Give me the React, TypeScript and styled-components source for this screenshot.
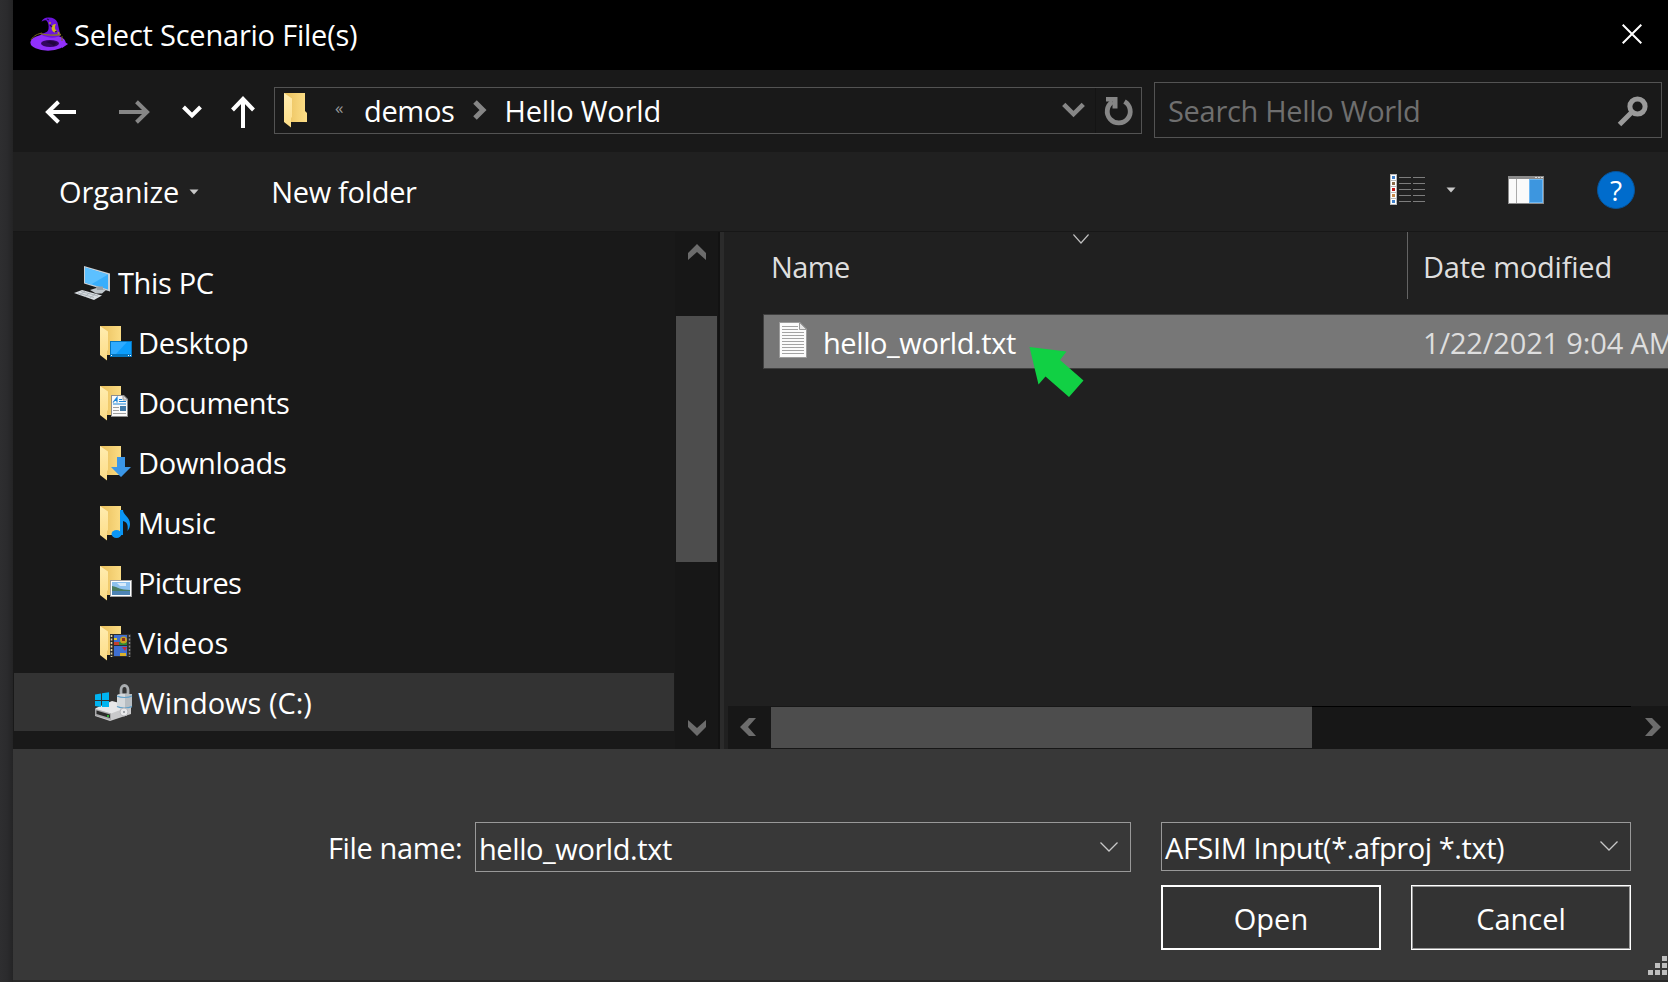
import React from 'react';
import styled, { createGlobalStyle } from 'styled-components';

const GlobalStyle = createGlobalStyle`
  * { box-sizing: border-box; }
  body {
    margin: 0;
    background: #2b2b2d;
    overflow: hidden;
    font-family: "Open Sans", "Noto Sans", sans-serif;
    font-size: 29px;
    line-height: 40px;
    color: #fff;
  }
  svg { display: block; flex: none; }
`;

const Desktop = styled.div`
  display: flex;
  width: 1668px;
  height: 982px;
  overflow: hidden;
`;

const Backdrop = styled.div`
  flex: none;
  width: 13px;
  background: linear-gradient(90deg, #2e2e30 0, #2b2b2d 7px, #242425 13px);
`;

const Dialog = styled.div`
  display: flex;
  flex-direction: column;
  width: 1655px;
  height: 982px;
  border-bottom: 2px solid #282828;
`;

const Label = styled.span<{ $spacing: number; $color?: string }>`
  white-space: pre;
  letter-spacing: ${(p) => p.$spacing}px;
  color: ${(p) => p.$color ?? '#fff'};
`;

const TitleBar = styled.header`
  display: flex;
  flex: none;
  align-items: center;
  height: 70px;
  padding: 0 26px 2px 17px;
  background: #000;
`;

const TitleText = styled.h1`
  flex: 1;
  margin: 2px 0 0 6px;
  font-size: inherit;
  font-weight: 400;
`;

const NavBar = styled.nav`
  display: flex;
  flex: none;
  height: 82px;
  padding: 12px 6px 14px 32px;
  background: #191919;
`;

const NavButton = styled.div<{ $gap: number }>`
  display: flex;
  align-items: center;
  height: 60px;
  margin-right: ${(p) => p.$gap}px;
`;

const AddressBar = styled.div`
  display: flex;
  align-items: center;
  width: 868px;
  height: 47px;
  margin: 5px 12px 0 0;
  padding-left: 9px;
  border: 1px solid #535353;
`;

const Overflow = styled.span`
  width: 10px;
  margin: -5px 19px 0 27px;
  font-size: 17px;
  color: #9a9a9a;
`;

const Crumb = styled.div`
  margin-top: 1px;
`;

const CrumbArrow = styled.div`
  margin: -2px 18px 0 18px;
`;

const AddressTools = styled.div`
  display: flex;
  align-items: center;
  margin-left: auto;
  height: 100%;
`;

const RefreshButton = styled.div`
  display: flex;
  align-items: center;
  height: 100%;
  margin-left: 10px;
  padding: 0 7px 0 8px;
  border-left: 1px solid #141414;
`;

const SearchBox = styled.div`
  display: flex;
  align-items: center;
  justify-content: space-between;
  width: 508px;
  height: 56px;
  padding: 2px 13px 0;
  border: 1px solid #535353;
`;

const Toolbar = styled.div`
  display: flex;
  flex: none;
  align-items: center;
  height: 80px;
  padding: 0 33px 0 46px;
  background: #202020;
  border-bottom: 1px solid #171717;
`;

const ToolbarButton = styled.div`
  display: flex;
  align-items: center;
  gap: 10px;
  margin-right: 72px;
`;

const ToolbarIcons = styled.div`
  display: flex;
  align-items: center;
  height: 40px;
  margin: -4px 0 0 auto;
`;

const IconSlot = styled.div<{ $gap?: number }>`
  margin-right: ${(p) => p.$gap ?? 0}px;
`;

const Body = styled.main`
  display: flex;
  flex: none;
  height: 517px;
  background: #202020;
`;

const Tree = styled.ul`
  width: 662px;
  margin: 0;
  padding: 20px 0 0;
  list-style: none;
  background: #191919;
`;

const TreeItem = styled.li<{ $indent: number; $gap: number; $selected?: boolean }>`
  display: flex;
  align-items: center;
  gap: ${(p) => p.$gap}px;
  height: 60px;
  padding: 2px 0 0 ${(p) => p.$indent}px;
  border: 1px solid #191919;
  background: ${(p) => (p.$selected ? '#333' : 'transparent')};
  background-clip: padding-box;
`;

const TreeScroll = styled.div`
  display: flex;
  flex-direction: column;
  align-items: center;
  width: 45px;
  padding: 12px 1px 13px 1px;
  background: #171717;
  border-right: 2px solid #121212;
`;

const TreeThumb = styled.div`
  width: 41px;
  height: 246px;
  margin: 56px 0 auto;
  background: #4d4d4d;
`;

const Splitter = styled.div`
  width: 4px;
  background: #2b2b2b;
`;

const Files = styled.section`
  display: flex;
  flex-direction: column;
  width: 944px;
`;

const ColumnHeaders = styled.div`
  display: flex;
  height: 67px;
`;

const NameColumn = styled.div`
  display: flex;
  width: 683px;
  padding: 15px 0 0 47px;
`;

const SortMark = styled.div`
  margin: -13px 0 0 223px;
`;

const DateColumn = styled.div`
  flex: 1;
  padding: 15px 0 0 15px;
  border-left: 1px solid #646464;
`;

const FileRow = styled.div`
  position: relative;
  display: flex;
  align-items: center;
  height: 55px;
  margin: 15px 0 0 39px;
  padding: 0 0 0 15px;
  background: #777;
  border: 1px solid #3f3f3f;
  border-right: 0;
`;

const FileIconSlot = styled.div`
  margin-top: -3px;
`;

const FileName = styled.div`
  flex: none;
  width: 616px;
  padding: 3px 0 0 16px;
`;

const FileDate = styled.div`
  flex: 1;
  width: 0;
  padding-top: 3px;
  overflow: hidden;
`;

const Pointer = styled.div`
  position: absolute;
  left: 265px;
  top: 31px;
`;

const FileScroll = styled.div`
  display: flex;
  align-items: center;
  height: 43px;
  margin: auto 0 0 4px;
  padding: 0 7px 0 12px;
  background: #171717;
`;

const FileThumb = styled.div`
  width: 541px;
  height: 41px;
  margin-left: 15px;
  background: #4d4d4d;
`;

const FileTrack = styled.div`
  flex: 1;
  height: 43px;
  margin-right: 14px;
  border-top: 1px solid #000;
`;

const Footer = styled.footer`
  position: relative;
  display: grid;
  flex: none;
  grid-template-columns: 145px 656px 220px 220px;
  grid-template-rows: 50px 65px;
  row-gap: 13px;
  height: 231px;
  padding: 73px 0 0 317px;
  background: #383838;
`;

const FieldLabel = styled.label`
  padding: 6px 0 0;
  margin-left: -2px;
`;

const Field = styled.div`
  display: flex;
  align-items: center;
  justify-content: space-between;
  height: 50px;
  padding: 3px 12px 0 3px;
  border: 1px solid #999;
`;

const TypeSelect = styled(Field)`
  grid-column: 3 / span 2;
  width: 470px;
  height: 49px;
  margin-left: 30px;
  padding-top: 2px;
  background: #333;
`;

const FieldChevron = styled.div`
  margin-top: -3px;
`;

const Actions = styled.div`
  display: flex;
  grid-column: 3 / span 2;
  gap: 30px;
  width: 470px;
  margin-left: 30px;
`;

const Button = styled.div<{ $primary?: boolean }>`
  display: flex;
  flex: 1;
  align-items: center;
  justify-content: center;
  padding-top: 3px;
  background: #333;
  border: 1px solid #fff;
  box-shadow: inset 0 0 0 1px ${(p) => (p.$primary ? '#fff' : '#999')};
`;

const Grip = styled.div`
  position: absolute;
  right: 1px;
  bottom: 5px;
`;

const HatIcon = () => (
  <svg width="38" height="36" viewBox="0 0 38 36">
    <ellipse cx="18" cy="26.500" rx="17.600" ry="8.200" fill="#9130fb" />
    <path d="M31 24 38 28 32 32z" fill="#9130fb" />
    <path d="M11 18c4-1 7-2 7.500-5C19 9 18 6 16.500 4.500 14 3.500 13 5 11.500 5.500 13 2.500 16 1 19 1.500c4 0 7 1.500 8.500 5l3 13c-4 3-13 3-19.500-1z" fill="#6d14dd" />
    <path d="M10 17.500c6 2 14 2 21 1" fill="none" stroke="#8f7d1b" strokeWidth="1.300" />
    <path d="M1 24c3-5 7-6 11-7M32 20v5" fill="none" stroke="#75651c" strokeWidth="1" />
    <path d="M26 8c-4 0-5 3-4 6s4 3 6 1c-3 0-4-4-2-7z" fill="#d0b820" />
    <circle cx="20" cy="7" r="1" fill="#b59c26" /><circle cx="28.500" cy="17" r="1" fill="#b59c26" />
    <path d="M20 9l2 2M25 16l2-1M17 3l2 1" stroke="#2d0759" strokeWidth="1.300" />
    <ellipse cx="20" cy="27.500" rx="9" ry="3.400" fill="#32075e" />
    <path d="M16 26c4-2 8-1 11 1l-3 3c-2-2-5-3-8-4z" fill="#210440" />
  </svg>
);

const CloseIcon = () => (
  <svg width="20" height="20" viewBox="0 0 20 20"><path d="M.7.7 19.300 19.300M19.300.7.7 19.300" stroke="#fff" strokeWidth="2" /></svg>
);

const ArrowLeft = () => (
  <svg width="31" height="24" viewBox="0 0 31 24"><path d="M31 12H3M13.500 1.800 3 12l10.500 10.200" fill="none" stroke="#fff" strokeWidth="4" /></svg>
);
const ArrowRight = () => (
  <svg width="31" height="24" viewBox="0 0 31 24"><path d="M0 12h28M17.500 1.800 28 12 17.500 22.200" fill="none" stroke="#868686" strokeWidth="4" /></svg>
);
const ArrowUp = () => (
  <svg width="24" height="32" viewBox="0 0 24 32"><path d="M12 32V3M1.500 14 12 3l10.500 11" fill="none" stroke="#fff" strokeWidth="4" /></svg>
);
const Chevron = ({ color, size = 20 }: { color: string; size?: number }) => (
  <svg width={size} height={size * 0.7} viewBox="0 0 20 14"><path d="M1.500 2 10 10.500 18.500 2" fill="none" stroke={color} strokeWidth="4" /></svg>
);
const CrumbChevron = () => (
  <svg width="14" height="20" viewBox="0 0 14 20"><path d="M2 2l8 8L2 18" fill="none" stroke="#868686" strokeWidth="5" /></svg>
);
const RefreshIcon = () => (
  <svg width="30" height="30" viewBox="0 0 30 30">
    <path d="M20.500 5.500A11.500 11.500 0 1 1 8.500 5.800" fill="none" stroke="#868686" strokeWidth="4.800" />
    <path d="M2 1h11.500v11.500h-5V5.500H2z" fill="#868686" />
  </svg>
);
const SearchIcon = () => (
  <svg width="31" height="31" viewBox="0 0 31 31">
    <circle cx="20.500" cy="10.500" r="7.600" fill="none" stroke="#9a9a9a" strokeWidth="5" />
    <path d="M15 16 2.500 28.500" stroke="#9a9a9a" strokeWidth="5" />
  </svg>
);
const Triangle = () => (
  <svg width="10" height="6" viewBox="0 0 10 6"><path d="M.5.500h9L5 5.500z" fill="#c8c8c8" /></svg>
);

const ViewIcon = () => (
  <svg width="36" height="31" viewBox="0 0 36 31">
    <path d="M0 0h7v31H0z" fill="#b9b9b9" />
    {['#3f7fc9', '#8a6a4a', '#c01818', '#c98a4a', '#3f7fc9'].map((c, i) => (
      <g key={i}>
        <path d={`M1 ${1 + i * 6}h5v5H1z`} fill="#fff" />
        <path d={`M2 ${2 + i * 6}h3v3H2z`} fill={c} />
        <path d={`M9 ${3.5 + i * 6}h12M23 ${3.5 + i * 6}h12`} stroke="#7d7d7d" />
      </g>
    ))}
  </svg>
);

const PaneIcon = () => (
  <svg width="36" height="28" viewBox="0 0 36 28">
    <path d="M0 0h36v28H0z" fill="#8b8b8b" />
    <path d="M1 3h20v24H1z" fill="#fafafa" />
    <path d="M8.500 3v24" stroke="#aaa" />
    <path d="M21 3h14v24H21z" fill="#6db8f4" /><path d="M22 4h12v22H22z" fill="#3d96df" />
    <path d="M27 1h2v1h-2zM30 1h2v1h-2zM33 1h2v1h-2z" fill="#ddd" />
  </svg>
);

const HelpBadge = styled.div`
  width: 38px;
  height: 38px;
  border-radius: 50%;
  background: #006ccc;
  border: 1px solid #07549a;
  font-size: 28px;
  font-weight: 500;
  line-height: 36px;
  text-align: center;
`;

const FolderShape = () => (
  <>
    <defs>
      <linearGradient id="folderBack" x1="0" y1="0" x2="1" y2="0">
        <stop offset="0" stopColor="#e9bf5c" /><stop offset="1" stopColor="#fddf88" />
      </linearGradient>
      <linearGradient id="folderFront" x1="0" y1="0" x2="0" y2="1">
        <stop offset="0" stopColor="#ffecb0" /><stop offset="1" stopColor="#fddd86" />
      </linearGradient>
    </defs>
    <path d="M0 0h21v18l2 2v9H2z" fill="url(#folderBack)" />
    <path d="M0 0l8 5.500V24l-1 1v9.500L0 29z" fill="url(#folderFront)" />
  </>
);

const AddressFolder = () => <svg width="24" height="35" viewBox="0 0 24 35"><FolderShape /></svg>;

const FolderIcon = ({ children }: { children?: React.ReactNode }) => (
  <svg width="33" height="35" viewBox="0 0 33 35"><FolderShape />{children}</svg>
);

const DesktopGlyph = () => (
  <>
    <path d="M10 15h22v16H10z" fill="#0675bd" />
    <path d="M11 16h20v12H11z" fill="#0c9dfb" /><path d="M11 16h16L16 28h-5z" fill="#2fabff" />
    <path d="M11 29h1v1h-1zM28 29h1v1h-1zM30 29h1v1h-1z" fill="#fff" />
  </>
);
const DocumentGlyph = () => (
  <>
    <path d="M11 9h13l4 4v18H11z" fill="#8d8d8d" /><path d="M12 10h11l4 4v16H12z" fill="#fafafa" />
    <path d="M23 9v5h5z" fill="#d8d8d8" stroke="#8d8d8d" strokeWidth=".8" />
    <path d="M13 16.500 17 11.500v5M15 14.500h2M19 13.500h3M19 15.500h7M13 18h13" fill="none" stroke="#1b84d6" strokeWidth="1.200" />
    <path d="M13 21.500h6M13 24.500h6M13 27.500h13" stroke="#a0a0a0" /><path d="M20 20h6v5h-6z" fill="#417aa8" />
  </>
);
const DownloadGlyph = () => <path d="M17 11h8v10h6L21 31 11 21h6z" fill="#3b97e8" />;
const MusicGlyph = () => (
  <>
    <ellipse cx="16.500" cy="28" rx="5" ry="4" fill="#0b96f5" />
    <path d="M20 4h3c0 5 7 7 7 14 0 3-1 5-2.500 7 1-7-1-9-4.500-10v14h-3z" fill="#0b96f5" />
  </>
);
const PictureGlyph = () => (
  <>
    <path d="M10 14h22v17H10z" fill="#a2a2a2" /><path d="M11 15h20v15H11z" fill="#fff" />
    <path d="M12 16h18v13H12z" fill="#8cc1f0" /><path d="M12 20c6 1 8 4 18 4v1H12z" fill="#4a7d61" />
    <path d="M12 25h18v4H12z" fill="#4c83b4" /><path d="M17 17h9v3h-6z" fill="#d7eafa" />
  </>
);
const VideoGlyph = () => (
  <>
    <path d="M10 8h21v23H10z" fill="#2d2d2d" /><path d="M14 9h13v10H14zM14 20h13v10H14z" fill="#3f6fd0" />
    <path d="M14 16h13v3H14z" fill="#2d8a38" /><path d="M14 16h5v3h-5z" fill="#c6402e" />
    <circle cx="23.500" cy="14" r="3.500" fill="#c9a01e" /><path d="M22 12h3v3h-3z" fill="#8f2f20" />
    <path d="M14 12h3v2h-3z" fill="#e3c72e" /><path d="M22 21h5l-2 4z" fill="#c22c43" /><path d="M20 27h6v3h-6z" fill="#d9b12b" />
    <path d="M11.500 9v22" stroke="#e5d7a0" strokeWidth="1.600" strokeDasharray="2 1.500" />
    <path d="M29.500 9v22" stroke="#8a8a8a" strokeWidth="1.400" strokeDasharray="2 1.500" />
  </>
);

const ComputerIcon = () => (
  <svg width="37" height="35" viewBox="0 0 37 35">
    <path d="M10 0l26 7.500v18L10 17.500z" fill="#c9d0d6" />
    <path d="M11 1.500 34 8.500V23.500L11 16.500z" fill="#38aefc" /><path d="M11 1.500 34 8.500 17 18.500l-6-2z" fill="#5cc0ff" />
    <path d="M16 24l8-2.500 8 2.500-4 3.500h-6z" fill="#bfc6cb" /><path d="M22 20.500h7v3.500h-6z" fill="#99a2a8" />
    <path d="M0 27l8-3 20 5.500-8 4.500z" fill="#d8dde1" />
    <path d="M4 27l16 4.500M7 25.500l17 4.500M6 29l5-4M11 30.500l5-4M16 32l5-4" stroke="#9ea6ac" strokeWidth=".7" />
  </svg>
);

const DriveIcon = () => (
  <svg width="38" height="39" viewBox="0 0 38 39">
    <path d="M0 25 17 18l19 4v8L15 37 0 32z" fill="#c9c9cb" /><path d="M0 24.500 17 17l19 5-20 7.500z" fill="#e7e7e9" />
    <path d="M0 25l16 4.500V36L0 31.500z" fill="#a8a8aa" /><path d="M1.500 26.500 15 30.500V34L1.500 30z" fill="#2b2b2b" />
    <circle cx="13" cy="32" r="1" fill="#2ad82f" />
    <path d="M0 10.500l6-1v6.500H0zM7 9.300l7-1V16H7zM0 17h6v6l-6-1zM7 17h7v6H7z" fill="#00b4f1" />
    <path d="M26 10V6c0-6 7-6 7 0v6" fill="none" stroke="#a9adb0" strokeWidth="2.800" />
    <path d="M22 11c4-2 11-2 15 0v12c-4 2-11 2-15 0z" fill="#d5d9dc" /><path d="M30 10h7v13l-7 1.500z" fill="#b7bdc2" />
    <path d="M22 12c4 2 11 2 15 0M22 22.500c4 2 11 2 15 0" fill="none" stroke="#5e9fc9" strokeWidth="1.200" />
    <circle cx="29" cy="28" r="4" fill="#e8e8ea" stroke="#b9b9bc" /><circle cx="29" cy="28" r="1" fill="#8a8f94" />
  </svg>
);

const TextFileIcon = () => (
  <svg width="28" height="36" viewBox="0 0 28 36">
    <path d="M0 0h21l7 7v29H0z" fill="#9c9c9c" /><path d="M1 1h19l7 7v27H1z" fill="#fbfbfb" />
    <path d="M20.500.500v7h7z" fill="#e6e6e6" stroke="#9c9c9c" />
    <path d="M3 4.500h16M3 7.500h16M3 10.500h22M3 13.500h22M3 16.500h22M3 19.500h22M3 22.500h22M3 25.500h22M3 28.500h22M3 31.500h22" stroke="#a3a3a3" />
  </svg>
);

const ScrollArrow = ({ turn }: { turn: 0 | 90 | 180 | 270 }) => {
  const sideways = turn === 90 || turn === 270;
  const d = { 0: 'M0 16V9L9 0l9 9v7L9 8z', 180: 'M0 0v7l9 9 9-9V0L9 8z', 270: 'M16 0H9L0 9l9 9h7L8 9z', 90: 'M0 0h7l9 9-9 9H0l8-9z' }[turn];
  return <svg width={sideways ? 16 : 18} height={sideways ? 20 : 16}><path d={d} fill="#6c6c6c" /></svg>;
};

const ThinChevron = ({ width, color }: { width: number; color: string }) => (
  <svg width={width} height="10" viewBox="0 0 18 10" preserveAspectRatio="none"><path d="M.5.500 9 9 17.500.500" fill="none" stroke={color} strokeWidth="1.300" /></svg>
);

const GreenArrow = () => (
  <svg width="56" height="52" viewBox="0 0 56 52"><path d="M.5 1 37.500 5.500 31 14 54.500 34.500 40 51 16.500 30.500 9.500 38.500z" fill="#11d044" /></svg>
);

const tree = [
  { name: 'Desktop', spacing: -0.19, glyph: <DesktopGlyph /> },
  { name: 'Documents', spacing: -0.43, glyph: <DocumentGlyph /> },
  { name: 'Downloads', spacing: -0.3, glyph: <DownloadGlyph /> },
  { name: 'Music', spacing: -0.25, glyph: <MusicGlyph /> },
  { name: 'Pictures', spacing: -0.7, glyph: <PictureGlyph /> },
  { name: 'Videos', spacing: 0.1, glyph: <VideoGlyph /> },
];

const gripDots = [[14, 0], [7, 7], [14, 7], [0, 14], [7, 14], [14, 14]];

export default function App() {
  return (
    <>
      <GlobalStyle />
      <Desktop>
        <Backdrop />
        <Dialog>
          <TitleBar>
            <HatIcon />
            <TitleText><Label $spacing={-0.22}>Select Scenario File(s)</Label></TitleText>
            <CloseIcon />
          </TitleBar>

          <NavBar>
            <NavButton $gap={43}><ArrowLeft /></NavButton>
            <NavButton $gap={32}><ArrowRight /></NavButton>
            <NavButton $gap={29}><Chevron color="#fff" /></NavButton>
            <NavButton $gap={19}><ArrowUp /></NavButton>
            <AddressBar>
              <AddressFolder />
              <Overflow>«</Overflow>
              <Crumb><Label $spacing={-0.33}>demos</Label></Crumb>
              <CrumbArrow><CrumbChevron /></CrumbArrow>
              <Crumb><Label $spacing={-0.17}>Hello World</Label></Crumb>
              <AddressTools>
                <Chevron color="#868686" size={23} />
                <RefreshButton><RefreshIcon /></RefreshButton>
              </AddressTools>
            </AddressBar>
            <SearchBox>
              <Label $spacing={-0.3} $color="#6f6f6f">Search Hello World</Label>
              <SearchIcon />
            </SearchBox>
          </NavBar>

          <Toolbar>
            <ToolbarButton><Label $spacing={-0.14}>Organize</Label><Triangle /></ToolbarButton>
            <ToolbarButton><Label $spacing={-0.3}>New folder</Label></ToolbarButton>
            <ToolbarIcons>
              <IconSlot $gap={20}><ViewIcon /></IconSlot>
              <IconSlot $gap={52}><Triangle /></IconSlot>
              <IconSlot $gap={53}><PaneIcon /></IconSlot>
              <HelpBadge>?</HelpBadge>
            </ToolbarIcons>
          </Toolbar>

          <Body>
            <Tree>
              <TreeItem $indent={60} $gap={7}>
                <ComputerIcon /><Label $spacing={-0.35}>This PC</Label>
              </TreeItem>
              {tree.map((item) => (
                <TreeItem key={item.name} $indent={86} $gap={5}>
                  <FolderIcon>{item.glyph}</FolderIcon>
                  <Label $spacing={item.spacing}>{item.name}</Label>
                </TreeItem>
              ))}
              <TreeItem $indent={81} $gap={5} $selected>
                <DriveIcon /><Label $spacing={0}>Windows (C:)</Label>
              </TreeItem>
            </Tree>
            <TreeScroll>
              <ScrollArrow turn={0} />
              <TreeThumb />
              <ScrollArrow turn={180} />
            </TreeScroll>
            <Splitter />
            <Files>
              <ColumnHeaders>
                <NameColumn>
                  <Label $spacing={-0.6} $color="#dedede">Name</Label>
                  <SortMark><ThinChevron width={16} color="#c0c0c0" /></SortMark>
                </NameColumn>
                <DateColumn><Label $spacing={-0.22} $color="#dedede">Date modified</Label></DateColumn>
              </ColumnHeaders>
              <FileRow>
                <FileIconSlot><TextFileIcon /></FileIconSlot>
                <FileName><Label $spacing={-0.42}>hello_world.txt</Label></FileName>
                <FileDate><Label $spacing={-0.15} $color="#dedede">1/22/2021 9:04 AM</Label></FileDate>
                <Pointer><GreenArrow /></Pointer>
              </FileRow>
              <FileScroll>
                <ScrollArrow turn={270} />
                <FileThumb />
                <FileTrack />
                <ScrollArrow turn={90} />
              </FileScroll>
            </Files>
          </Body>

          <Footer>
            <FieldLabel><Label $spacing={-0.38}>File name:</Label></FieldLabel>
            <Field>
              <Label $spacing={-0.42}>hello_world.txt</Label>
              <FieldChevron><ThinChevron width={18} color="#c8c8c8" /></FieldChevron>
            </Field>
            <TypeSelect>
              <Label $spacing={-0.42}>AFSIM Input(*.afproj *.txt)</Label>
              <FieldChevron><ThinChevron width={18} color="#c8c8c8" /></FieldChevron>
            </TypeSelect>
            <Actions>
              <Button $primary><Label $spacing={0}>Open</Label></Button>
              <Button><Label $spacing={0}>Cancel</Label></Button>
            </Actions>
            <Grip>
              <svg width="19" height="19">
                {gripDots.map(([x, y]) => <rect key={`${x}-${y}`} x={x} y={y} width="5" height="5" fill="#bfbfbf" />)}
              </svg>
            </Grip>
          </Footer>
        </Dialog>
      </Desktop>
    </>
  );
}
